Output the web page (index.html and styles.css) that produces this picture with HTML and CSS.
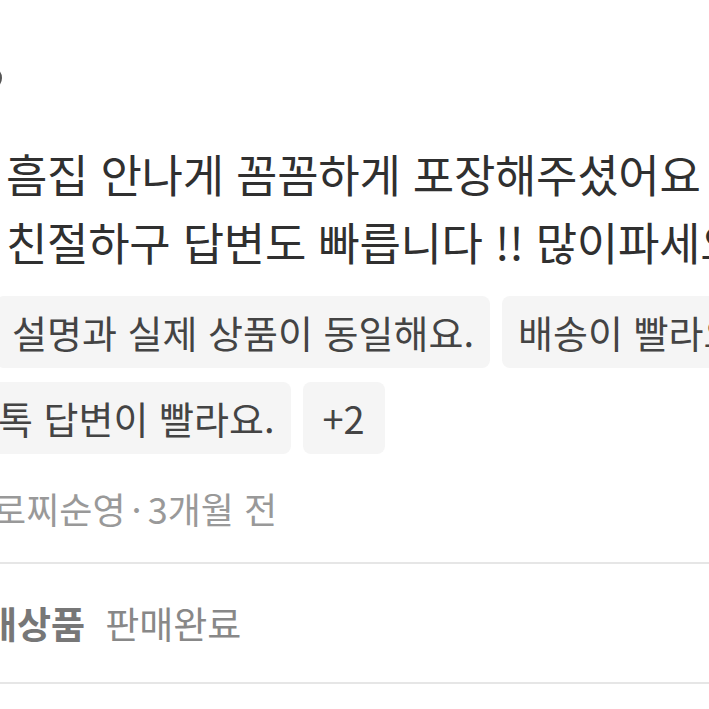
FILE: index.html
```html
<!DOCTYPE html>
<html lang="ko">

<head>
    <meta charset="UTF-8">
    <title>후기</title>
    <link rel="stylesheet" href="styles.css">
</head>

<body>
    <div class="page">
        <div class="review">
            <div class="review-head">
                <span class="avatar-edge"></span>
            </div>
            <p class="review-text">흠집 안나게 꼼꼼하게 포장해주셨어요<br>친절하구 답변도 빠릅니다 !! 많이파세요</p>
            <div class="tags">
                <div class="tag-row">
                    <span class="tag">설명과 실제 상품이 동일해요.</span>
                    <span class="tag">배송이 빨라요.</span>
                </div>
                <div class="tag-row tag-row-cut">
                    <span class="tag">번개톡 답변이 빨라요.</span>
                    <span class="tag tag-more">+2</span>
                </div>
            </div>
            <div class="review-meta">모로찌순영<span class="dot">·</span>3개월 전</div>
        </div>
        <div class="product">
            <span class="product-label">구매상품</span>
            <span class="product-name">판매완료</span>
        </div>
    </div>
</body>

</html>
```

FILE: styles.css
```css
* {
    margin: 0;
    padding: 0;
    box-sizing: border-box;
}

html, body {
    width: 709px;
    height: 709px;
    overflow: hidden;
    background: #fff;
}

body {
    font-family: "Noto Sans CJK KR", "Noto Sans", sans-serif;
    color: #333;
}

.page {
    width: 1100px;
    margin-left: -4px;
    white-space: nowrap;
}

.review {
    border-bottom: 2px solid #e6e6e6;
}

.review-head {
    height: 140px;
    padding-top: 66px;
    margin-left: -20px;
}

.avatar-edge {
    display: block;
    width: 26px;
    height: 24px;
    border: 3px solid #555;
    border-radius: 50%;
}

.review-text {
    font-size: 45px;
    line-height: 68px;
    color: #303030;
    padding-left: 10px;
    letter-spacing: -0.3px;
}

.tags {
    display: flex;
    flex-direction: column;
    gap: 14px;
    margin-top: 20px;
}

.tag-row {
    display: flex;
    gap: 12px;
}

.tag-row-cut {
    margin-left: -84px;
}

.tag {
    display: block;
    height: 72px;
    line-height: 72px;
    padding: 0 16px;
    background-color: #f5f5f5;
    border-radius: 8px;
    font-size: 38px;
    color: #444;
}

.tag-more {
    padding: 0 20px;
}

.review-meta {
    height: 108px;
    line-height: 108px;
    margin-left: -36px;
    font-size: 36px;
    color: #999;
}

.review-meta .dot {
    margin: 0 6px;
}

.product {
    display: flex;
    align-items: center;
    gap: 20px;
    height: 120px;
    margin-left: -47px;
    border-bottom: 2px solid #e6e6e6;
    font-size: 37px;
}

.product-label {
    font-weight: bold;
    color: #777;
}

.product-name {
    color: #888;
}
```
